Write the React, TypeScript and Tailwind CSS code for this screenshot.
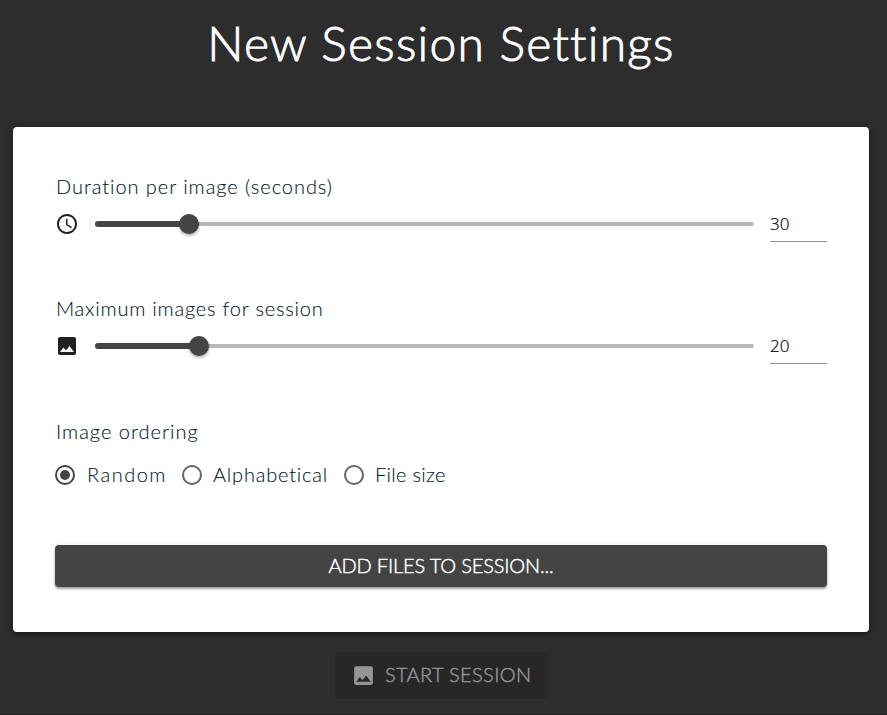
const IMAGE_PATH =
  'M21 19V5c0-1.1-.9-2-2-2H5c-1.1 0-2 .9-2 2v14c0 1.1.9 2 2 2h14c1.1 0 2-.9 2-2zM8.5 13.5l2.5 3.01L14.5 12l4.5 6H5l3.5-4.5z';
const CLOCK_PATH =
  'M11.99 2C6.47 2 2 6.48 2 12s4.47 10 9.99 10C17.52 22 22 17.52 22 12S17.52 2 11.99 2zM12 20c-4.42 0-8-3.58-8-8s3.58-8 8-8 8 3.58 8 8-3.58 8-8 8zM12.5 7H11v6l5.25 3.15.75-1.23-4.5-2.67z';

function Icon({ path, className }: { path: string; className: string }) {
  return (
    <svg viewBox="0 0 24 24" fill="currentColor" className={className}>
      <path d={path} />
    </svg>
  );
}

function SliderField(props: { label: string; labelClass: string; icon: string; value: number; filled: number }) {
  return (
    <div className="h-[76px]">
      <div className={`mb-[3px] flex h-8 items-center pl-px whitespace-nowrap ${props.labelClass}`}>{props.label}</div>
      <div className="flex h-[41px] items-start">
        <Icon path={props.icon} className="mt-[7px] size-6 shrink-0 text-[#212121]" />
        <div className="relative ml-4 mt-[17px] h-1 w-[659px] rounded-full bg-[#b9b9b9]">
          <div className="absolute -top-px left-0 h-1.5 rounded-full bg-[#444]" style={{ width: props.filled }} />
          <div
            className="absolute -top-2 size-5 -translate-x-1/2 rounded-full bg-[#444] shadow-[0_2px_3px_rgba(0,0,0,0.3)]"
            style={{ left: props.filled }}
          />
        </div>
        <div className="ml-4 mt-px flex h-9 w-[57px] items-center border-b border-[#949494] pt-px font-['Open_Sans',sans-serif] text-[17px] font-light text-black [-webkit-text-stroke:0.2px_black]">
          {props.value}
        </div>
      </div>
    </div>
  );
}

function Radio({ label, checked, labelClass }: { label: string; checked?: boolean; labelClass: string }) {
  return (
    <label className="flex h-6 items-center">
      <span
        className={`flex size-5 shrink-0 items-center justify-center rounded-full border-2 ${checked ? 'border-[#444]' : 'border-[#666]'}`}
      >
        {checked && <span className="size-2.5 rounded-full bg-[#444]" />}
      </span>
      <span className={`pb-0.5 whitespace-nowrap ${labelClass}`}>{label}</span>
    </label>
  );
}

export default function App() {
  return (
    <div className="h-[715px] w-[887px] overflow-hidden border-b border-[#262626] bg-[#2d2d2d] font-['Lato',sans-serif] text-xl font-light text-[#001a26]">
      <div className="flex w-[882px] flex-col items-center">
        <h1 className="flex h-[127px] items-start pt-3.5 text-5xl leading-[58px] font-light tracking-[1.25px] whitespace-nowrap text-white [-webkit-text-stroke:0.9px_white]">
          New Session Settings
        </h1>
        <main className="h-[505px] w-[856px] rounded bg-white px-[42px] pt-[43px] shadow-[0_2px_4px_rgba(0,0,0,0.35),0_1px_8px_rgba(0,0,0,0.2)] [-webkit-text-stroke:0.1px]">
          <SliderField label="Duration per image (seconds)" labelClass="tracking-[0.95px]" icon={CLOCK_PATH} value={30} filled={94} />
          <div className="h-[46px]" />
          <SliderField label="Maximum images for session" labelClass="tracking-[0.8px]" icon={IMAGE_PATH} value={20} filled={104} />
          <div className="mt-[47px] flex h-8 items-center pl-px tracking-[1px]">Image ordering</div>
          <div className="mt-4 flex">
            <div className="w-[127px]">
              <Radio label="Random" checked labelClass="pl-3 tracking-[1.5px]" />
            </div>
            <div className="w-[162px]">
              <Radio label="Alphabetical" labelClass="pl-[11px] tracking-[0.8px]" />
            </div>
            <Radio label="File size" labelClass="pl-[11px] tracking-[0.3px]" />
          </div>
          <button className="mt-[58px] flex h-[42px] w-full items-center justify-center rounded bg-[#444] pb-0.5 text-xl font-light tracking-[-0.15px] text-white shadow-[0_2px_2px_rgba(0,0,0,0.3),0_1px_5px_rgba(0,0,0,0.15)] [-webkit-text-stroke:0.45px_white]">
            ADD FILES TO SESSION...
          </button>
        </main>
        <button className="mt-5 flex h-[47px] w-[212px] items-center rounded bg-[#272727] pl-4 text-xl font-light whitespace-nowrap text-[#959595]">
          <Icon path={IMAGE_PATH} className="mr-[9px] size-[25px] shrink-0 text-[#959595]" />
          <span className="pb-[3px] tracking-[0.35px] [-webkit-text-stroke:0.45px_#959595]">START SESSION</span>
        </button>
      </div>
    </div>
  );
}
